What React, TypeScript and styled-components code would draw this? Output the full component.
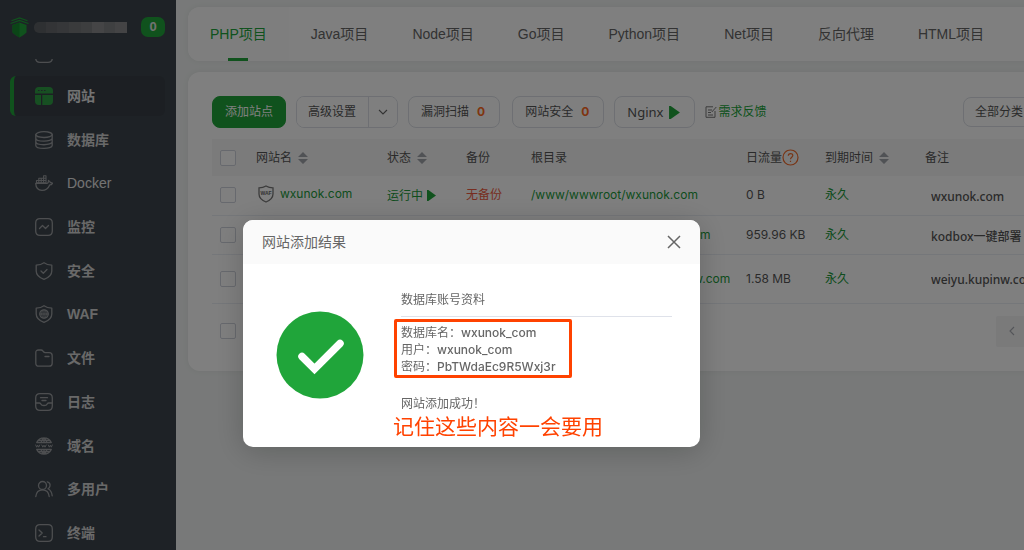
import React from 'react';
import styled, { createGlobalStyle, css } from 'styled-components';

const CJK = '"Noto Sans CJK SC"';
const UI_FONT = `Inter, ${CJK}, sans-serif`;
const NAV_FONT = `"Liberation Sans", ${CJK}, sans-serif`;
const TEXT_FONT = `"Noto Sans", ${CJK}, sans-serif`;

const GlobalStyle = createGlobalStyle`
  *, *::before, *::after { box-sizing: border-box; }
  body { margin: 0; background: #f0f3f2; font: 12px/20px ${UI_FONT}; color: #555; overflow: hidden; }
  button, input, select { font: inherit; color: inherit; margin: 0; }
  button { cursor: pointer; }
  a { color: inherit; text-decoration: none; }
`;

const Page = styled.div`
  display: flex;
  height: 100vh;
  overflow: hidden;
`;

/* ---------- sidebar ---------- */

const Sidebar = styled.aside`
  display: flex;
  flex-direction: column;
  flex: none;
  width: 176px;
  height: 100vh;
  padding: 17px 11px 0 10px;
  background: #3c444c;
  overflow: hidden;
`;

const Brand = styled.header`
  display: flex;
  align-items: center;
  flex: none;
  height: 20px;
  gap: 5px;
  margin-bottom: 22px;
`;

const Masked = styled.div`
  display: flex;
  width: 93px;
  height: 11px;
  border-radius: 5px 0 0 5px;
  overflow: hidden;
`;

const MaskBlock = styled.span<{ $tone: string }>`
  flex: 1;
  background: ${(p) => p.$tone};
`;

const Count = styled.span`
  margin-left: auto;
  width: 24px;
  height: 20px;
  border-radius: 7px;
  background: #20a53a;
  color: #e4e4e4;
  font: bold 13px/20px ${NAV_FONT};
  text-align: center;
`;

const ScrolledItem = styled.div`
  display: flex;
  flex: none;
  align-items: flex-end;
  height: 4px;
  padding-left: 25px;
  margin-bottom: 13px;
  overflow: hidden;
`;

const Menu = styled.nav`
  display: flex;
  flex: 1;
  flex-direction: column;
  justify-content: space-between;
  margin-bottom: -3px;
`;

const MenuItem = styled.a<{ $active?: boolean; $light?: boolean }>`
  display: flex;
  align-items: center;
  flex: none;
  gap: 14px;
  height: 40px;
  padding-left: 21px;
  border-left: 4px solid transparent;
  border-radius: 6px;
  font: ${(p) => (p.$light ? 'normal' : 'bold')} 14px/20px ${NAV_FONT};
  color: ${(p) => (p.$light ? '#e6e6e6' : '#d2d2d2')};
  ${(p) =>
    p.$active &&
    css`
      background: #383f46;
      border-left-color: #20a53a;
      color: #e6e6e6;
    `}
`;

const NavIcon = styled.svg`
  flex: none;
  width: 18px;
  height: 18px;
  fill: none;
  stroke: #9a9da0;
  stroke-width: 1.3;
  stroke-linecap: round;
  stroke-linejoin: round;
`;

/* ---------- main area ---------- */

const Main = styled.main`
  flex: 1;
  min-width: 0;
  padding: 7px 0 0 12px;
  overflow: hidden;
`;

const Card = styled.section`
  min-width: 912px;
  border-radius: 12px;
  background: #fff;
  box-shadow: 0 0 6px rgba(0, 0, 0, 0.06);
`;

const TabBar = styled(Card)`
  display: flex;
  height: 54px;
  margin-bottom: 11px;
  overflow: hidden;
`;

const Tab = styled.button<{ $active?: boolean }>`
  position: relative;
  padding: 0 22px;
  border: 0;
  background: none;
  font-family: ${NAV_FONT};
  font-size: 14px;
  white-space: nowrap;
  color: #666;
  ${(p) =>
    p.$active &&
    css`
      background: #fdfdfd;
      color: #20a53a;
      &::after {
        content: '';
        position: absolute;
        left: 50%;
        bottom: 0;
        width: 20px;
        height: 3px;
        margin-left: -10px;
        background: #20a53a;
      }
    `}
`;

const SitePanel = styled(Card)`
  padding: 24px;
`;

const Toolbar = styled.div`
  display: flex;
  align-items: center;
  gap: 12px;
  margin-bottom: 11px;
`;

const ToolGroup = styled.div`
  display: flex;
  align-items: center;
  gap: 10px;
`;

const Button = styled.button<{ $primary?: boolean }>`
  display: flex;
  align-items: center;
  gap: 8px;
  height: 32px;
  padding: 0 14px 0 12px;
  border: 1px solid #dcdfe6;
  border-radius: 8px;
  background: #fff;
  white-space: nowrap;
  ${(p) =>
    p.$primary &&
    css`
      padding: 0 12px;
      border-color: #20a53a;
      background: #20a53a;
      color: #fff;
    `}
`;

const ServerButton = styled(Button)`
  gap: 6px;
  font-family: ${TEXT_FONT};
  font-size: 13px;
`;

const Split = styled.div`
  display: flex;
  border: 1px solid #dcdfe6;
  border-radius: 8px;
  overflow: hidden;
`;

const SplitPart = styled.button`
  display: flex;
  align-items: center;
  height: 30px;
  padding: 0 12px 0 11px;
  border: 0;
  background: #fff;
  & + & {
    padding: 0 9px;
    border-left: 1px solid #dcdfe6;
  }
`;

const Alert = styled.b`
  color: #ff6a1f;
`;

const Feedback = styled.a`
  display: flex;
  align-items: center;
  gap: 1px;
  color: #20a53a;
`;

const Category = styled.select`
  appearance: none;
  width: 113px;
  height: 30px;
  margin-left: auto;
  padding: 0 11px;
  border: 1px solid #dcdfe6;
  border-radius: 8px;
  background: #fff;
`;

const Table = styled.table`
  width: 100%;
  table-layout: fixed;
  border-collapse: collapse;
`;

const Th = styled.th<{ $w?: number }>`
  width: ${(p) => (p.$w ? `${p.$w}px` : 'auto')};
  height: 37px;
  padding: 0;
  background: #f7f7f7;
  font-weight: normal;
  text-align: left;
  white-space: nowrap;
`;

const Td = styled.td<{ $tone?: 'green' | 'red' }>`
  padding: 0;
  border-bottom: 1px solid #ebeef5;
  white-space: nowrap;
  color: ${(p) => (p.$tone === 'green' ? '#209a3a' : p.$tone === 'red' ? '#ef5b40' : 'inherit')};
`;

const Row = styled.tr<{ $tall?: boolean }>`
  height: ${(p) => (p.$tall ? 49 : 39)}px;
`;

const Inline = styled.span`
  display: inline-flex;
  align-items: center;
  gap: 6px;
  vertical-align: middle;
`;

const StatusLabel = styled(Inline)`
  gap: 4px;
`;

const HelpLabel = styled(Inline)`
  gap: 0;
`;

const SiteLink = styled.a`
  display: flex;
  align-items: center;
  gap: 6px;
  padding: 0 0 2px 2px;
`;

const Check = styled.input`
  appearance: none;
  display: block;
  width: 16px;
  height: 16px;
  margin: 0 0 0 8px;
  border: 1px solid #cfd3dc;
  border-radius: 2px;
  background: #fff;
`;

const Remark = styled.input`
  display: block;
  width: 100%;
  height: 24px;
  padding: 2px 0 0 6px;
  border: 0;
  background: none;
  font-family: ${TEXT_FONT};
  font-weight: 500;
`;

const Footer = styled.footer`
  display: flex;
  align-items: center;
  justify-content: space-between;
  padding-top: 12px;
`;

const Pager = styled.div`
  display: flex;
  width: 80px;
`;

const PageButton = styled.button`
  display: flex;
  align-items: center;
  justify-content: center;
  width: 32px;
  height: 31px;
  padding: 0;
  border: 0;
  border-radius: 2px;
  background: #f4f4f5;
`;

/* ---------- dialog ---------- */

const Shade = styled.div`
  position: fixed;
  inset: 0;
  background: rgba(0, 0, 0, 0.5);
`;

const Dialog = styled.section`
  position: absolute;
  top: 220px;
  left: 243px;
  width: 457px;
  border-radius: 10px;
  background: #fff;
  box-shadow: 0 4px 30px rgba(0, 0, 0, 0.2);
  color: #666;
  overflow: hidden;
`;

const DialogHeader = styled.header`
  display: flex;
  align-items: center;
  justify-content: space-between;
  height: 44px;
  padding: 0 19px;
  background: #fafafa;
`;

const DialogTitle = styled.h2`
  margin: 0;
  font-size: 14px;
  font-weight: normal;
`;

const Close = styled.button`
  display: flex;
  padding: 0;
  border: 0;
  background: none;
`;

const DialogBody = styled.div`
  display: flex;
  align-items: flex-start;
  gap: 37px;
  padding: 26px 28px 7px 33px;
`;

const ResultIcon = styled.svg`
  flex: none;
  width: 88px;
  height: 88px;
  margin-top: 21px;
`;

const Result = styled.div`
  flex: 1;
`;

const ResultTitle = styled.h3`
  margin: 0 0 2px;
  padding-bottom: 6px;
  border-bottom: 1px solid #dfe2ea;
  font-size: 12px;
  font-weight: normal;
`;

const Credentials = styled.dl`
  width: 178px;
  margin: 0 0 16px -7px;
  padding: 2px 4px 0;
  border: 3px solid #ff4200;
  border-radius: 2px;
  line-height: 17px;
`;

const Credential = styled.div`
  display: flex;
  white-space: nowrap;
`;

const Value = styled.dd`
  margin: 0;
  font-weight: 500;
`;

const Message = styled.p`
  margin: 0;
`;

const Note = styled.p`
  margin: 0 0 0 -8px;
  color: #ff4200;
  font-size: 21px;
  line-height: 26px;
`;

/* ---------- drawings ---------- */

const Logo = () => (
  <svg width="19" height="21" viewBox="0 0 19 21" aria-hidden="true">
    <path d="M2.500 8 9.500 5.500 16.500 8v7.500Q13.500 18.500 9.500 20.500 5.500 18.500 2.500 15.500Z" fill="#20a53a" />
    <path d="M9.500 5.500v15Q5.500 18.500 2.500 15.500V8Z" fill="#178a2e" />
    <path d="M.5 6.500 9.500 3.500l9 3M1.500 3.800 9.500 1l8 2.800" fill="none" stroke="#20a53a" strokeWidth="1.200" />
  </svg>
);

const Sort = () => (
  <svg width="10" height="12" viewBox="0 0 10 12" fill="#a0a4ab" aria-hidden="true">
    <path d="M5 0 10 5H0ZM5 12 0 7h10Z" />
  </svg>
);

const Play = ({ width = 10, height = 12 }: { width?: number; height?: number }) => (
  <svg width={width} height={height} viewBox="0 0 10 12" fill="#20a53a" aria-hidden="true">
    <path d="M0 0 1.500 0 10 6 1.500 12H0Z" />
  </svg>
);

const WafBadge = () => (
  <svg width="16" height="18" viewBox="0 0 16 18" aria-hidden="true">
    <path d="M8 1Q11 2.800 15 2.800V9Q15 14 8 17 1 14 1 9V2.800Q5 2.800 8 1Z" fill="none" stroke="#777" strokeWidth="1.300" />
    <text x="8" y="10" textAnchor="middle" fontSize="5" fontWeight="700" fontFamily="Liberation Sans" fill="#666">
      WAF
    </text>
  </svg>
);

const Help = () => (
  <svg width="17" height="17" viewBox="0 0 17 17" fill="none" stroke="#f06a2a" strokeWidth="1.200" aria-hidden="true">
    <circle cx="8.500" cy="8.500" r="7.500" />
    <path d="M6.300 6.800C6.300 3.800 10.800 3.900 10.800 6.600 10.800 8.300 8.500 8.300 8.500 10.300M8.500 11.700v1.300" />
  </svg>
);

const FeedbackIcon = () => (
  <svg width="12" height="12" viewBox="0 0 12 12" fill="none" stroke="#777" strokeWidth="1" aria-hidden="true">
    <path d="M8 .8H1v10.500h9V5M3 4h4M3 6.500h3M3 9h5M6.800 6l4.500-5" />
  </svg>
);

const Chevron = ({ left }: { left?: boolean }) => (
  <svg width="10" height="10" viewBox="0 0 10 10" fill="none" stroke={left ? '#a8abb2' : '#666'} strokeWidth="1.100" aria-hidden="true">
    <path d={left ? 'M7 1 3 5l4 4' : 'M1 3l4 4 4-4'} />
  </svg>
);

const SuccessMark = () => (
  <ResultIcon viewBox="0 0 88 88" role="img" aria-label="成功">
    <circle cx="44" cy="44" r="43.500" fill="#20a53a" />
    <path d="M26 45.500 38.500 58 64 32.500" fill="none" stroke="#fff" strokeWidth="7.500" strokeLinecap="round" strokeLinejoin="miter" />
  </ResultIcon>
);

const BOX = 'M5 .7h8Q17.300.7 17.300 5v8q0 4.300-4.300 4.300H5Q.7 17.300.7 13V5Q.7.7 5 .7Z';
const SHIELD = 'M9 .7Q12 2.900 16.800 3.200V9Q16.800 14.500 9 17.400 1.200 14.500 1.200 9V3.200Q6 2.900 9 .7Z';

const icons: Record<string, React.ReactNode> = {
  site: (
    <g stroke="none" fill="#2f9f45">
      <path d="M4 0h10q4 0 4 4v2.500H0V4Q0 0 4 0Z" />
      <path d="M0 8h6v10H4q-4 0-4-4ZM7.300 8H18v6q0 4-4 4H7.300Z" />
      <path d="M3 3.500h1.500M6 3.500h1.500M9 3.500h1.500" stroke="#3c444c" strokeWidth="1.200" strokeLinecap="butt" />
    </g>
  ),
  database: (
    <>
      <ellipse cx="9" cy="3.600" rx="8.200" ry="2.900" />
      <path d="M.8 3.600v10.800C.8 18.300 17.200 18.300 17.200 14.400V3.600M.8 7.200c0 3.900 16.400 3.900 16.400 0M.8 10.800c0 3.900 16.400 3.900 16.400 0" />
    </>
  ),
  docker: (
    <>
      <path d="M.7 9.300h11.500q1.500-.2 1.300-2.800 1.700.8 1.900 2.200 1.300-.2 2.100.5-.8 1.700-2.800 1.700Q12.500 16.300 7 16.300 1 16.300.7 9.300Z" />
      <path d="M1.500 6.500h9.500v2.300H1.500ZM3.800 4.200h7.200v2.300M6.200 4.200v4.600M8.600 1.700v7.100M3.800 4.200v4.600M8.600 1.700H11v2.500" strokeWidth="1.100" />
    </>
  ),
  monitor: (
    <>
      <path d={BOX} />
      <path d="m4.500 10.500 3-3 3 3 3-3" />
    </>
  ),
  security: (
    <>
      <path d={SHIELD} />
      <path d="m6 9 2.300 2.200L12 7.500" />
    </>
  ),
  waf: (
    <>
      <path d={SHIELD} />
      <circle cx="9" cy="9" r="4.200" />
      <path d="M4.800 9h8.400M9 4.800v8.400M7.200 5.500q-1 3.500 0 7M10.800 5.500q1 3.500 0 7" strokeWidth="1" />
    </>
  ),
  files: <path d="M.8 3.500Q.8 1 3.500 1H6q1.200 0 2 1.200T10 3.700h4.200q3 0 3 3v7.500q0 3-3 3H3.800q-3 0-3-3ZM10 7.500h4" />,
  logs: (
    <>
      <path d={BOX} />
      <path d="M.8 10h3.700q1 0 1.500 1.200Q6.500 12.500 9 12.500t3-1.300q.5-1.200 1.500-1.200h3.700M5.500 4.700h7M7 7.500h4" />
    </>
  ),
  domains: (
    <>
      <path d="M1.700 5.500Q4 .8 9 .8t7.300 4.700ZM1.700 12.500Q4 17.200 9 17.200t7.300-4.700ZM6 5.500Q7 2 9 .8q2 1.200 3 4.700M6 12.500q1 3.500 3 4.700 2-1.200 3-4.700M9 .8v4.700M9 12.500v4.700M3.500 3.300h11M3.500 14.700h11" />
      <path d="m.7 8 1 2.200 1-2 1 2 1-2.200M6.800 8l1 2.200 1.200-2 1 2L11.200 8M13.300 8l1 2.200 1-2 1 2 1-2.200" strokeWidth="1" />
    </>
  ),
  users: (
    <>
      <circle cx="7.500" cy="5.500" r="4" />
      <path d="M.8 16.500Q1.500 9.800 7.500 9.800t6.700 6.700M12.300 1.800q3.200 1 2.700 4-.3 2-2 3 3.700 2 4.200 7" />
    </>
  ),
  terminal: (
    <>
      <path d={BOX} />
      <path d="m4 6 3.200 3L4 12M8.500 12.700H11" />
    </>
  ),
};

const MenuGlyph = ({ name }: { name: string }) => (
  <NavIcon viewBox="0 0 18 18" aria-hidden="true">
    {icons[name]}
  </NavIcon>
);

/* ---------- content ---------- */

const menu = [
  ['site', '网站'],
  ['database', '数据库'],
  ['docker', 'Docker'],
  ['monitor', '监控'],
  ['security', '安全'],
  ['waf', 'WAF'],
  ['files', '文件'],
  ['logs', '日志'],
  ['domains', '域名'],
  ['users', '多用户'],
  ['terminal', '终端'],
];

const tabs = ['PHP项目', 'Java项目', 'Node项目', 'Go项目', 'Python项目', 'Net项目', '反向代理', 'HTML项目'];

const sites = [
  { name: 'wxunok.com', root: '/www/wwwroot/wxunok.com', traffic: '0 B', remark: 'wxunok.com' },
  { name: '', root: '/www/wwwroot/kd.kupinw.com', traffic: '959.96 KB', remark: 'kodbox一键部署' },
  { name: '', root: '/www/wwwroot/weiyu.kupinw.com', traffic: '1.58 MB', remark: 'weiyu.kupinw.com' },
];

const credentials = [
  ['数据库名：', 'wxunok_com'],
  ['用户：', 'wxunok_com'],
  ['密码：', 'PbTWdaEc9R5Wxj3r'],
];

const maskTones = ['#5c6064', '#66696d', '#6c6f72', '#747679', '#7a7c7f', '#8a8b8d', '#7e8083', '#88898b'];

export default function App() {
  return (
    <>
      <GlobalStyle />
      <Page>
        <Sidebar>
          <Brand>
            <Logo />
            <Masked>
              {maskTones.map((tone, i) => (
                <MaskBlock key={i} $tone={tone} />
              ))}
            </Masked>
            <Count>0</Count>
          </Brand>
          <ScrolledItem>
            <MenuGlyph name="monitor" />
          </ScrolledItem>
          <Menu>
            {menu.map(([icon, label], i) => (
              <MenuItem key={icon} href="#" $active={i === 0} $light={icon === 'docker'}>
                <MenuGlyph name={icon} />
                {label}
              </MenuItem>
            ))}
          </Menu>
        </Sidebar>

        <Main>
          <TabBar>
            {tabs.map((tab, i) => (
              <Tab key={tab} $active={i === 0}>
                {tab}
              </Tab>
            ))}
          </TabBar>

          <SitePanel>
            <Toolbar>
              <ToolGroup>
                <Button $primary>添加站点</Button>
                <Split>
                  <SplitPart>高级设置</SplitPart>
                  <SplitPart aria-label="更多设置">
                    <Chevron />
                  </SplitPart>
                </Split>
                <Button>
                  漏洞扫描 <Alert>0</Alert>
                </Button>
              </ToolGroup>
              <ToolGroup>
                <Button>
                  网站安全 <Alert>0</Alert>
                </Button>
                <ServerButton>
                  Nginx <Play width={11} height={13} />
                </ServerButton>
                <Feedback href="#">
                  <FeedbackIcon />
                  需求反馈
                </Feedback>
              </ToolGroup>
              <Category aria-label="分类">
                <option>全部分类</option>
              </Category>
            </Toolbar>

            <Table>
              <thead>
                <tr>
                  <Th $w={44}>
                    <Check type="checkbox" aria-label="全选" />
                  </Th>
                  <Th $w={131}>
                    <Inline>
                      网站名 <Sort />
                    </Inline>
                  </Th>
                  <Th $w={79}>
                    <Inline>
                      状态 <Sort />
                    </Inline>
                  </Th>
                  <Th $w={65}>备份</Th>
                  <Th $w={215}>根目录</Th>
                  <Th $w={79}>
                    <HelpLabel>
                      日流量
                      <Help />
                    </HelpLabel>
                  </Th>
                  <Th $w={100}>
                    <Inline>
                      到期时间 <Sort />
                    </Inline>
                  </Th>
                  <Th>备注</Th>
                </tr>
              </thead>
              <tbody>
                {sites.map((site, i) => (
                  <Row key={site.root} $tall={i === 2}>
                    <Td>
                      <Check type="checkbox" aria-label={site.root} />
                    </Td>
                    <Td $tone="green">
                      {site.name && (
                        <SiteLink href="#">
                          <WafBadge /> {site.name}
                        </SiteLink>
                      )}
                    </Td>
                    <Td $tone="green">
                      {site.name && (
                        <StatusLabel>
                          运行中 <Play width={9} height={11} />
                        </StatusLabel>
                      )}
                    </Td>
                    <Td $tone="red">{site.name && '无备份'}</Td>
                    <Td $tone="green">{site.root}</Td>
                    <Td>{site.traffic}</Td>
                    <Td $tone="green">永久</Td>
                    <Td>
                      <Remark defaultValue={site.remark} aria-label="备注" />
                    </Td>
                  </Row>
                ))}
              </tbody>
            </Table>

            <Footer>
              <Check type="checkbox" aria-label="批量选择" />
              <Pager>
                <PageButton aria-label="上一页">
                  <Chevron left />
                </PageButton>
              </Pager>
            </Footer>
          </SitePanel>
        </Main>
      </Page>

      <Shade>
        <Dialog role="dialog" aria-modal="true" aria-labelledby="result-title">
          <DialogHeader>
            <DialogTitle id="result-title">网站添加结果</DialogTitle>
            <Close aria-label="关闭">
              <svg width="14" height="14" viewBox="0 0 14 14" fill="none" stroke="#666" strokeWidth="1.500">
                <path d="m1 1 12 12M13 1 1 13" />
              </svg>
            </Close>
          </DialogHeader>
          <DialogBody>
            <SuccessMark />
            <Result>
              <ResultTitle>数据库账号资料</ResultTitle>
              <Credentials>
                {credentials.map(([label, value]) => (
                  <Credential key={label}>
                    <dt>{label}</dt>
                    <Value>{value}</Value>
                  </Credential>
                ))}
              </Credentials>
              <Message>网站添加成功！</Message>
              <Note>记住这些内容一会要用</Note>
            </Result>
          </DialogBody>
        </Dialog>
      </Shade>
    </>
  );
}
